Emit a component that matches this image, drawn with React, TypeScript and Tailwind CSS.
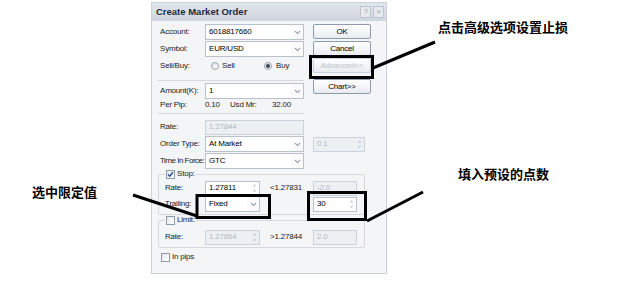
import React from "react"

function Chevron() {
  return (
    <svg width="7" height="5" viewBox="0 0 7 5">
      <path d="M1 1.2 L3.5 3.6 L6 1.2" fill="none" stroke="#8a94a3" strokeWidth="1.1" />
    </svg>
  )
}

function Combo({ value, w }: { value: string; w: string }) {
  return (
    <div className={`${w} h-[16px] flex items-center bg-white border border-[#b9c1cc]`}>
      <span className="flex-1 pl-[3px] text-black">{value}</span>
      <span className="w-[12px] h-full flex items-center justify-center bg-[#fbfbfc]">
        <Chevron />
      </span>
    </div>
  )
}

function Spin({ value, w, disabled }: { value: string; w: string; disabled?: boolean }) {
  return (
    <div
      className={`${w} h-[15px] flex items-center border ${
        disabled ? "bg-[#edf0f3] border-[#ccd2da] text-[#b3b9c2]" : "bg-white border-[#b9c1cc] text-black"
      }`}
    >
      <span className="flex-1 pl-[3px]">{value}</span>
      <span className="w-[9px] flex flex-col items-center leading-none text-[6px] text-[#a4acb7]">
        <span className="h-[5px]">˄</span>
        <span className="h-[5px]">˅</span>
      </span>
    </div>
  )
}

function Box({ value, w }: { value: string; w: string }) {
  return (
    <div className={`${w} h-[15px] flex items-center pl-[3px] bg-[#edf0f3] border border-[#ccd2da] text-[#b3b9c2]`}>
      {value}
    </div>
  )
}

function Btn({ label, disabled }: { label: string; disabled?: boolean }) {
  return (
    <div
      className={`h-[15px] flex items-center justify-center rounded-[2px] border bg-gradient-to-b from-white to-[#e8ebf0] ${
        disabled ? "border-[#ccd2da] text-[#bcc2ca]" : "border-[#8d9bb0] text-black"
      }`}
    >
      {label}
    </div>
  )
}

function Check({ checked }: { checked?: boolean }) {
  return (
    <span className="w-[9px] h-[9px] flex items-center justify-center border border-[#8f9aa8] bg-gradient-to-br from-[#e4e7ec] to-white">
      {checked && (
        <svg width="7" height="7" viewBox="0 0 7 7">
          <path d="M1 3.5 L2.8 5.3 L6 1.2" fill="none" stroke="#2b4a9b" strokeWidth="1.4" />
        </svg>
      )}
    </span>
  )
}

function Radio({ on }: { on?: boolean }) {
  return (
    <span className="w-[8px] h-[8px] rounded-full border border-[#9aa3af] bg-gradient-to-br from-[#dfe3e8] to-white flex items-center justify-center">
      {on && <span className="w-[4px] h-[4px] rounded-full bg-[#3b4250]" />}
    </span>
  )
}

function Row({ label, children, lw = "w-[47px] pl-[2px]", mt = "mt-[2px]" }: { label: string; children: React.ReactNode; lw?: string; mt?: string }) {
  return (
    <div className={`flex items-center h-[16px] ${mt}`}>
      <span className={`${lw} shrink-0 overflow-visible`}>{label}</span>
      {children}
    </div>
  )
}

export default function App() {
  return (
    <div className="relative w-[623px] h-[282px] bg-white overflow-hidden font-['Liberation_Sans',Arial,sans-serif] text-[8px] leading-[10px] tracking-[-0.2px] whitespace-nowrap text-[#1c1c1c]">
      {/* Dialog */}
      <div className="ml-[151px] mt-[2px] w-[236px] h-[272px] bg-[#f4f5f7] border border-[#ccd1d9]">
        <div className="h-[18px] flex items-center pl-[4px] pr-[2px] bg-gradient-to-b from-[#e2e6ed] to-[#cfd5df]">
          <span className="text-[9.5px] font-bold tracking-normal text-[#1f2a3b]">Create Market Order</span>
          <span className="ml-auto w-[11px] h-[12px] flex items-center justify-center border border-[#bcc3ce] bg-[#e6e9ee] text-[8px] text-[#9aa3b0]">?</span>
          <span className="ml-[2px] w-[11px] h-[12px] flex items-center justify-center border border-[#bcc3ce] bg-[#e6e9ee] text-[8px] text-[#9aa3b0]">×</span>
        </div>

        <div className="pl-[6px]">
          <div className="flex">
            <div className="w-[146px] pt-[3px]">
              <Row label="Account:" mt="mt-0">
                <Combo value="6018817660" w="w-[99px]" />
              </Row>
              <Row label="Symbol:" mt="mt-[1px]">
                <Combo value="EUR/USD" w="w-[99px]" />
              </Row>
              <Row label="Sell/Buy:" mt="mt-[1px]">
                <span className="ml-[6px] flex items-center gap-[3px] w-[53px]">
                  <Radio /> Sell
                </span>
                <span className="flex items-center gap-[4px]">
                  <Radio on /> Buy
                </span>
              </Row>
              <div className="mt-[6px] h-px bg-[#d6dae0]" />
              <Row label="Amount(K):">
                <Combo value="1" w="w-[99px]" />
              </Row>
              <div className="flex items-center h-[12px]">
                <span className="w-[47px] pl-[2px]">Per Pip:</span>
                <span className="w-[25px]">0.10</span>
                <span className="w-[42px]">Usd Mr:</span>
                <span>32.00</span>
              </div>
              <div className="mt-[2px] h-px bg-[#d6dae0]" />
            </div>
            <div className="ml-[9px] w-[58px] pt-[3px] flex flex-col">
              <Btn label="OK" />
              <div className="mt-[2px]"><Btn label="Cancel" /></div>
              <div className="mt-[2px]"><Btn label="Advanced<<" disabled /></div>
              <div className="mt-[6px]"><Btn label="Chart>>" /></div>
            </div>
          </div>

          <Row label="Rate:" mt="mt-[5px]">
            <Box value="1.27844" w="w-[99px]" />
          </Row>
          <Row label="Order Type:" mt="mt-[1px]">
            <Combo value="At Market" w="w-[99px]" />
            <span className="ml-[9px]"><Spin value="0.1" w="w-[52px]" disabled /></span>
          </Row>
          <Row label="Time In Force:" lw="w-[47px] pl-[2px] tracking-[-0.5px]" mt="mt-[1px]">
            <Combo value="GTC" w="w-[99px]" />
          </Row>

          {/* Stop */}
          <fieldset className="w-[207px] border border-[#d5d9df] rounded-[2px] pb-[2px]">
            <legend className="ml-[6px] px-[1px] h-[10px] flex items-center gap-[2px]">
              <Check checked /> Stop:
            </legend>
            <Row label="Rate:" lw="w-[46px] pl-[6px]" mt="mt-[1px]">
              <Spin value="1.27811" w="w-[55px]" />
              <span className="ml-[10px] w-[43px]">&lt;1.27831</span>
              <Box value="-2.0" w="w-[44px]" />
            </Row>
            <Row label="Trailing:" lw="w-[46px] pl-[6px]" mt="mt-0">
              <Combo value="Fixed" w="w-[55px]" />
              <span className="ml-[53px]"><Spin value="30" w="w-[44px]" /></span>
            </Row>
          </fieldset>

          {/* Limit */}
          <fieldset className="w-[207px] border border-[#d5d9df] rounded-[2px] pb-[2px]">
            <legend className="ml-[6px] px-[1px] h-[10px] flex items-center gap-[2px]">
              <Check /> Limit:
            </legend>
            <Row label="Rate:" lw="w-[46px] pl-[6px]" mt="mt-[4px]">
              <Spin value="1.27864" w="w-[55px]" disabled />
              <span className="ml-[10px] w-[43px]">&gt;1.27844</span>
              <Box value="2.0" w="w-[44px]" />
            </Row>
          </fieldset>

          <div className="mt-[4px] pl-[3px] flex items-center gap-[2px]">
            <Check /> In pips
          </div>
        </div>
      </div>

      {/* Annotation layer */}
      <svg className="absolute left-0 top-0 pointer-events-none" width="623" height="282" viewBox="0 0 623 282">
        <g fill="none" stroke="#000" strokeWidth="3">
          <rect x="310.5" y="56.5" width="62" height="21" />
          <rect x="197" y="195.5" width="72.5" height="22" />
          <rect x="308.5" y="192.5" width="57" height="27" />
          <line x1="373" y1="68" x2="435" y2="42" />
          <line x1="367" y1="221" x2="423" y2="192" />
          <line x1="133" y1="195" x2="197" y2="216" />
        </g>
      </svg>
      <div className="absolute left-[438px] top-[20px] text-[13px] leading-[13px] tracking-normal font-bold text-black font-['Noto_Sans_CJK_SC',sans-serif]">
        点击高级选项设置止损
      </div>
      <div className="absolute left-[458px] top-[167px] text-[13px] leading-[13px] tracking-normal font-bold text-black font-['Noto_Sans_CJK_SC',sans-serif]">
        填入预设的点数
      </div>
      <div className="absolute left-[32px] top-[185px] text-[13px] leading-[13px] tracking-normal font-bold text-black font-['Noto_Sans_CJK_SC',sans-serif]">
        选中限定值
      </div>
    </div>
  )
}
